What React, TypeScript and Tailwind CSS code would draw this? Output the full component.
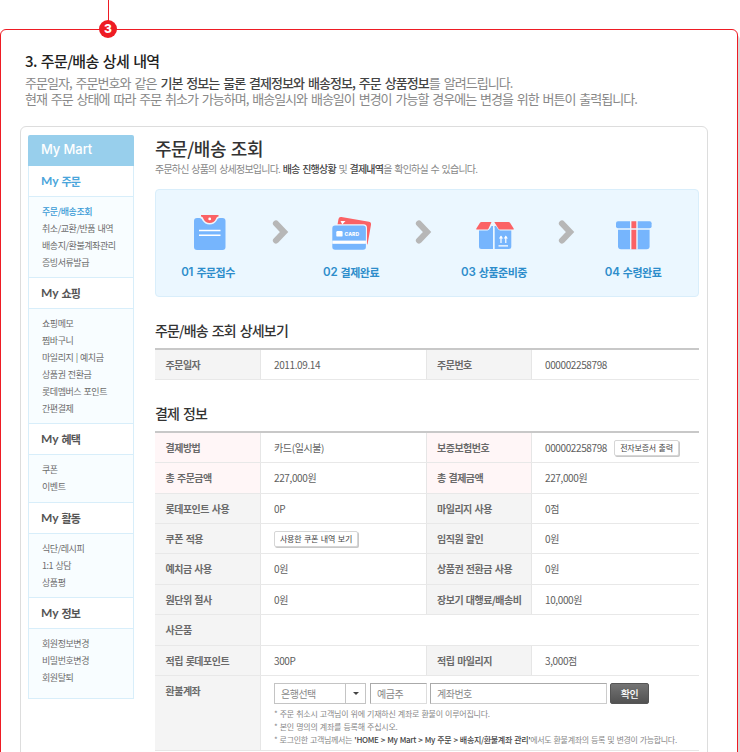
import type { ReactNode } from "react";

type MenuSection = { title: string; items: string[]; height: string; active?: boolean };

const menu: MenuSection[] = [
  { title: "주문", items: ["주문/배송조회", "취소/교환/반품 내역", "배송지/환불계좌관리", "증빙서류발급"], height: "h-[81px]", active: true },
  { title: "쇼핑", items: ["쇼핑메모", "찜바구니", "마일리지 | 예치금", "상품권 전환금", "롯데멤버스 포인트", "간편결제"], height: "h-[115px]" },
  { title: "혜택", items: ["쿠폰", "이벤트"], height: "h-[48px]" },
  { title: "활동", items: ["식단/레시피", "1:1 상담", "상품평"], height: "h-[64px]" },
  { title: "정보", items: ["회원정보변경", "비밀번호변경", "회원탈퇴"], height: "h-[70px]" },
];

function Sidebar() {
  return (
    <nav className="w-[106px] shrink-0">
      <div className="flex h-[31px] items-center rounded-t-[2px] bg-[#98cfec] pb-px pl-[13px] font-['Inter'] text-[13px] font-medium tracking-[-0.1px] text-white">
        My Mart
      </div>
      <div className="border-x border-[#d8eefa]">
        {menu.map((s) => (
          <div key={s.title}>
            <div
              className={`flex h-[31px] items-center border-b border-[#d8eefa] pl-[12px] text-[11px] font-bold tracking-[-0.8px] ${s.active ? "text-[#4aa5db]" : "text-[#555]"}`}
            >
              <span className="mr-[3px] font-['Lato'] text-[12px] font-bold tracking-normal">My</span>
              {s.title}
            </div>
            <ul className={`border-b border-[#d8eefa] bg-[#f8fdff] pt-[6px] pl-[13px] text-[9px] leading-[17px] tracking-[-0.45px] [word-spacing:0.8px] text-[#6c6c6c] ${s.height}`}>
              {s.items.map((item, i) => (
                <li key={item} className={`whitespace-nowrap ${s.active && i === 0 ? "font-medium text-[#3a9bd6]" : ""}`}>
                  {item}
                </li>
              ))}
            </ul>
          </div>
        ))}
      </div>
    </nav>
  );
}

function OrderIcon() {
  return (
    <svg className="ml-px" width="32" height="35" viewBox="0 0 32 35">
      <rect x="0" y="3" width="31.5" height="32" rx="3" fill="#76b5fd" />
      <path d="M5.500 0h20v3c-1.500 0-2 1-2.600 2.200C21.300 8 18.700 9.500 15.600 9.500S10 8 8.300 5.200C7.700 4 7 3 5.500 3z" fill="#ebf7ff" />
      <path d="M7 0h17.500v1.500c-1.400.3-2 1.100-2.600 2.400C20.800 6.600 18.500 8 15.700 8s-5-1.400-6.200-4.100C9 2.600 8.400 1.800 7 1.500z" fill="#fb6265" />
      <circle cx="15.700" cy="3.900" r="1.400" fill="#fff" />
      <path d="M5 15.500h21.500M5 20.200h21.500" stroke="#fff" strokeWidth="1.500" />
    </svg>
  );
}

function CardIcon() {
  return (
    <svg className="-ml-px" width="39" height="34" viewBox="0 0 39 34">
      <rect x="6.500" y="3" width="33" height="24" rx="2.500" fill="#fb6265" transform="rotate(10 6.500 3) translate(0 -2.500)" />
      <path d="M8.500 5h5l-3.200 3.500z" fill="#fff" />
      <rect x="-1" y="8.300" width="36" height="27" rx="3.500" fill="#ebf7ff" />
      <rect x="0.300" y="9.600" width="33.600" height="24.200" rx="2.800" fill="#76b5fd" />
      <rect x="0.300" y="24.600" width="33.600" height="3.200" fill="#fff" />
      <rect x="4.300" y="15" width="6.300" height="5.600" rx="1.200" fill="#fff" />
      <text x="12.600" y="19.700" fontSize="5" fontWeight="800" fill="#fff" fontFamily="Inter, sans-serif" textLength="14.500">CARD</text>
    </svg>
  );
}

function BoxIcon() {
  return (
    <svg className="-ml-px" width="38" height="29" viewBox="0 0 38 29">
      <path d="M3 9.500h8.500c1.500 0 2.700-2.300 4-4.500h1.500v23H5.500A2.500 2.500 0 0 1 3 25.500z" fill="#76b5fd" />
      <path d="M18.500 5H20c1.400 2.200 2.600 4.500 4.100 4.500h11.200v16a2.500 2.500 0 0 1-2.500 2.500H18.500z" fill="#76b5fd" />
      <path d="M5.500 1H15.500L12.600 7.400Q12 8.600 10.600 8.600H1Q-.3 8.400.5 7.200L4 1.800Q4.500 1 5.500 1z" fill="#fb6265" />
      <path d="M32.500 1H18.300l4 6.400q.8 1.200 2 1.200H37q1.300-.2.500-1.400L34 1.800Q33.500 1 32.500 1z" fill="#fb6265" />
      <path d="M17.800 7v21" stroke="#ebf7ff" strokeWidth="1.200" />
      <path d="M25 22v-6.500M29.800 22v-6.500M22.500 24.800h9.500" stroke="#fff" strokeWidth="1.200" />
      <path d="M22.900 17.500L25 14.600l2.100 2.900zM27.700 17.500l2.100-2.900 2.100 2.900z" fill="#fff" />
    </svg>
  );
}

function GiftIcon() {
  return (
    <svg className="-ml-px" width="36" height="29" viewBox="0 0 36 29">
      <rect x="0" y="0.300" width="35.600" height="7" rx="2" fill="#76b5fd" />
      <path d="M2 8.700h31.600v16.600a3 3 0 0 1-3 3H5a3 3 0 0 1-3-3z" fill="#76b5fd" />
      <path d="M14 0h7.700v28.500H14z" fill="#ebf7ff" />
      <path d="M15.400 0.300h4.900v7h-4.900zM15.400 8.700h4.900v19.600h-4.900z" fill="#fb6265" />
    </svg>
  );
}

function Chevron() {
  return (
    <div className="flex h-[33px] w-[67px] shrink-0 items-center justify-center">
      <svg width="17" height="26" viewBox="0 0 17 26">
        <path d="M4 4.500L12 13l-8 8.500" fill="none" stroke="#b7b7b7" strokeWidth="6.200" strokeLinecap="round" strokeLinejoin="miter" />
      </svg>
    </div>
  );
}

function Step({ no, label, icon, last = false }: { no: string; label: string; icon: ReactNode; last?: boolean }) {
  return (
    <div className={`flex w-[76px] shrink-0 flex-col items-center ${last ? "-ml-1" : ""}`}>
      <div className="flex h-[35px] items-end justify-center">{icon}</div>
      <div className="mt-[14px] mr-[2px] flex h-[17px] items-center whitespace-nowrap text-[11px] font-bold tracking-[-0.5px] text-[#2d8dcb]">
        <span className="mr-[3px] pt-px font-['Inter'] text-[11.5px] font-semibold tracking-[-0.1px]">{no}</span>
        {label}
      </div>
    </div>
  );
}

function Label({ children, pink = false, second = false, top = false }: { children: ReactNode; pink?: boolean; second?: boolean; top?: boolean }) {
  return (
    <div
      className={`flex w-[106px] shrink-0 border-r border-[#e6e6e6] pb-px font-bold tracking-[-0.5px] [word-spacing:1px] whitespace-nowrap text-[#6a6a6a] ${top ? "items-start pt-[7px]" : "items-center"} ${second ? "border-l pl-[10px]" : "pl-[10.5px]"} ${pink ? "bg-[#fff6f7]" : "bg-[#f4f4f4]"}`}
    >
      {children}
    </div>
  );
}

function Value({ children }: { children?: ReactNode }) {
  return <div className="flex w-[165px] shrink-0 items-center pb-px pl-[13px] whitespace-nowrap text-[#606060]">{children}</div>;
}

function SmallButton({ children, className }: { children: ReactNode; className: string }) {
  return (
    <button className={`mt-px flex h-[16px] items-center justify-center rounded-[2px] border border-[#d6d6d6] bg-white text-[8px] text-[#444] shadow-[1px_1px_0_#c8c8c8] ${className}`}>
      {children}
    </button>
  );
}

type Row = { a: string; av: ReactNode; b?: string; bv?: ReactNode; pink?: boolean; height: string };

const rows: Row[] = [
  {
    a: "결제방법",
    av: "카드(일시불)",
    b: "보증보험번호",
    bv: (
      <>
        000002258798
        <SmallButton className="ml-[7px] w-[65px] tracking-[-0.2px] [word-spacing:1px]">전자보증서 출력</SmallButton>
      </>
    ),
    pink: true,
    height: "h-[30px]",
  },
  { a: "총 주문금액", av: "227,000원", b: "총 결제금액", bv: "227,000원", pink: true, height: "h-[31px]" },
  { a: "롯데포인트 사용", av: "0P", b: "마일리지 사용", bv: "0점", height: "h-[30px]" },
  {
    a: "쿠폰 적용",
    av: <SmallButton className="w-[84px] tracking-[-0.2px] [word-spacing:1px]">사용한 쿠폰 내역 보기</SmallButton>,
    b: "임직원 할인",
    bv: "0원",
    height: "h-[30px]",
  },
  { a: "예치금 사용", av: "0원", b: "상품권 전환금 사용", bv: "0원", height: "h-[31px]" },
  { a: "원단위 절사", av: "0원", b: "장보기 대행료/배송비", bv: "10,000원", height: "h-[30px]" },
  { a: "사은품", av: null, height: "h-[31px]" },
  { a: "적립 롯데포인트", av: "300P", b: "적립 마일리지", bv: "3,000점", height: "h-[30px]" },
];

function TableRow({ row }: { row: Row }) {
  return (
    <div className={`flex border-b border-[#e8e8e8] ${row.height}`}>
      <Label pink={row.pink}>{row.a}</Label>
      <Value>{row.av}</Value>
      {row.b && (
        <>
          <Label second pink={row.pink}>{row.b}</Label>
          <Value>{row.bv}</Value>
        </>
      )}
    </div>
  );
}

function RefundRow() {
  return (
    <div className="flex h-[75px] border-b border-[#e6e6e6]">
      <Label top>환불계좌</Label>
      <div className="flex-1 pt-[7px] pl-[13px]">
        <div className="flex h-[21px] text-[10px] tracking-[-0.5px] text-[#888]">
          <div className="flex w-[92px] border border-[#c4c4c4]">
            <span className="flex flex-1 items-center pl-[6px]">은행선택</span>
            <span className="flex w-[20px] items-center justify-center border-l border-[#c4c4c4]">
              <span className="border-x-[3px] border-t-[3px] border-x-transparent border-t-[#444]" />
            </span>
          </div>
          <div className="ml-[4px] flex w-[57px] items-center border border-t-[#aaa] border-r-[#ddd] border-b-[#ddd] border-l-[#aaa] pl-[6px]">예금주</div>
          <div className="ml-[3px] flex w-[177px] items-center border border-t-[#aaa] border-r-[#ccc] border-b-[#ccc] border-l-[#aaa] pl-[6px]">계좌번호</div>
          <button className="ml-[3px] flex w-[39px] items-center justify-center rounded-[2px] border border-[#555] bg-linear-to-b from-[#747474] to-[#525252] font-medium text-white">확인</button>
        </div>
        <div className="mt-[3px] text-[8px] leading-[13px] tracking-[-0.24px] [word-spacing:0.7px] whitespace-nowrap text-[#888]">
          <p>* 주문 취소시 고객님이 위에 기재하신 계좌로 환불이 이루어집니다.</p>
          <p>* 본인 명의의 계좌를 등록해 주십시오.</p>
          <p className="tracking-[-0.32px]">
            * 로그인한 고객님께서는 <span className="font-medium text-[#444]">'HOME &gt; My Mart &gt; My 주문 &gt; 배송지/환불계좌 관리'</span>에서도 환불계좌의 등록 및 변경이 가능합니다.
          </p>
        </div>
      </div>
    </div>
  );
}

export default function App() {
  return (
    <div className="relative h-[752px] w-[740px] overflow-hidden bg-white pt-[29px] font-['Noto_Sans_CJK_KR',sans-serif]">
      <div className="absolute top-0 left-[108px] h-[29px] w-px bg-[#ee1c24]" />
      <div className="absolute top-[20px] left-[99px] z-10 flex size-[18px] items-center justify-center rounded-full bg-[#ee1c24] font-['Inter'] text-[12px] leading-none font-extrabold text-white">
        3
      </div>
      <div className="h-[740px] w-[738px] rounded-[6px] border border-[#ee1c24] bg-white shadow-[2px_5px_0_#d9d9d9]">
        <header className="h-[96px] pt-[19px] pl-[24px] whitespace-nowrap">
          <h1 className="h-[25px] text-[15px] leading-[24px] font-medium tracking-[-0.65px] [word-spacing:1.4px] text-[#222]">3. 주문/배송 상세 내역</h1>
          <p className="h-[16px] pt-px text-[13px] leading-[16px] tracking-[-0.96px] [word-spacing:1.95px] text-[#888]">
            주문일자, 주문번호와 같은 <span className="font-medium text-[#444]">기본 정보는 물론 결제정보와 배송정보, 주문 상품정보</span>를 알려드립니다.
          </p>
          <p className="h-[16px] pt-px text-[13px] leading-[16px] tracking-[-0.99px] [word-spacing:1.95px] text-[#888]">
            현재 주문 상태에 따라 주문 취소가 가능하며, 배송일시와 배송일이 변경이 가능할 경우에는 변경을 위한 버튼이 출력됩니다.
          </p>
        </header>
        <div className="ml-[19px] flex h-[700px] w-[688px] rounded-[6px] border border-[#ddd] pt-[8px] pl-[7px]">
          <Sidebar />
          <main className="ml-[21px] w-[544px] shrink-0">
            <h2 className="h-[27px] text-[18px] leading-[27px] font-medium tracking-[-0.45px] [word-spacing:1.2px] text-[#333]">주문/배송 조회</h2>
            <p className="h-[14px] text-[10px] leading-[14px] tracking-[-0.79px] [word-spacing:1.2px] whitespace-nowrap text-[#888]">
              주문하신 상품의 상세정보입니다. <span className="font-medium text-[#444]">배송 진행상황</span> 및 <span className="font-medium text-[#444]">결제내역</span>을 확인하실 수 있습니다.
            </p>
            <section className="mt-[13px] flex h-[108px] rounded-[4px] border border-[#d9eefb] bg-[#ebf7ff] pt-[25px] pl-[15px]">
              <Step no="01" label="주문접수" icon={<OrderIcon />} />
              <Chevron />
              <Step no="02" label="결제완료" icon={<CardIcon />} />
              <Chevron />
              <Step no="03" label="상품준비중" icon={<BoxIcon />} />
              <Chevron />
              <Step no="04" label="수령완료" icon={<GiftIcon />} last />
            </section>
            <h3 className="mt-[23px] h-[21px] text-[14px] leading-[20px] font-medium tracking-[-0.85px] [word-spacing:1.7px] text-[#333]">주문/배송 조회 상세보기</h3>
            <div className="mt-[7px] border-t-2 border-[#c8c8c8] text-[10px] tracking-[-0.38px]">
              <TableRow row={{ a: "주문일자", av: "2011.09.14", b: "주문번호", bv: "000002258798", height: "h-[30px]" }} />
            </div>
            <h3 className="mt-[23px] h-[21px] text-[14px] leading-[20px] font-medium tracking-[-0.85px] [word-spacing:1.7px] text-[#333]">결제 정보</h3>
            <div className="mt-[7px] border-t-2 border-[#c8c8c8] text-[10px] tracking-[-0.38px]">
              {rows.map((row) => (
                <TableRow key={row.a} row={row} />
              ))}
              <RefundRow />
            </div>
          </main>
        </div>
      </div>
    </div>
  );
}
